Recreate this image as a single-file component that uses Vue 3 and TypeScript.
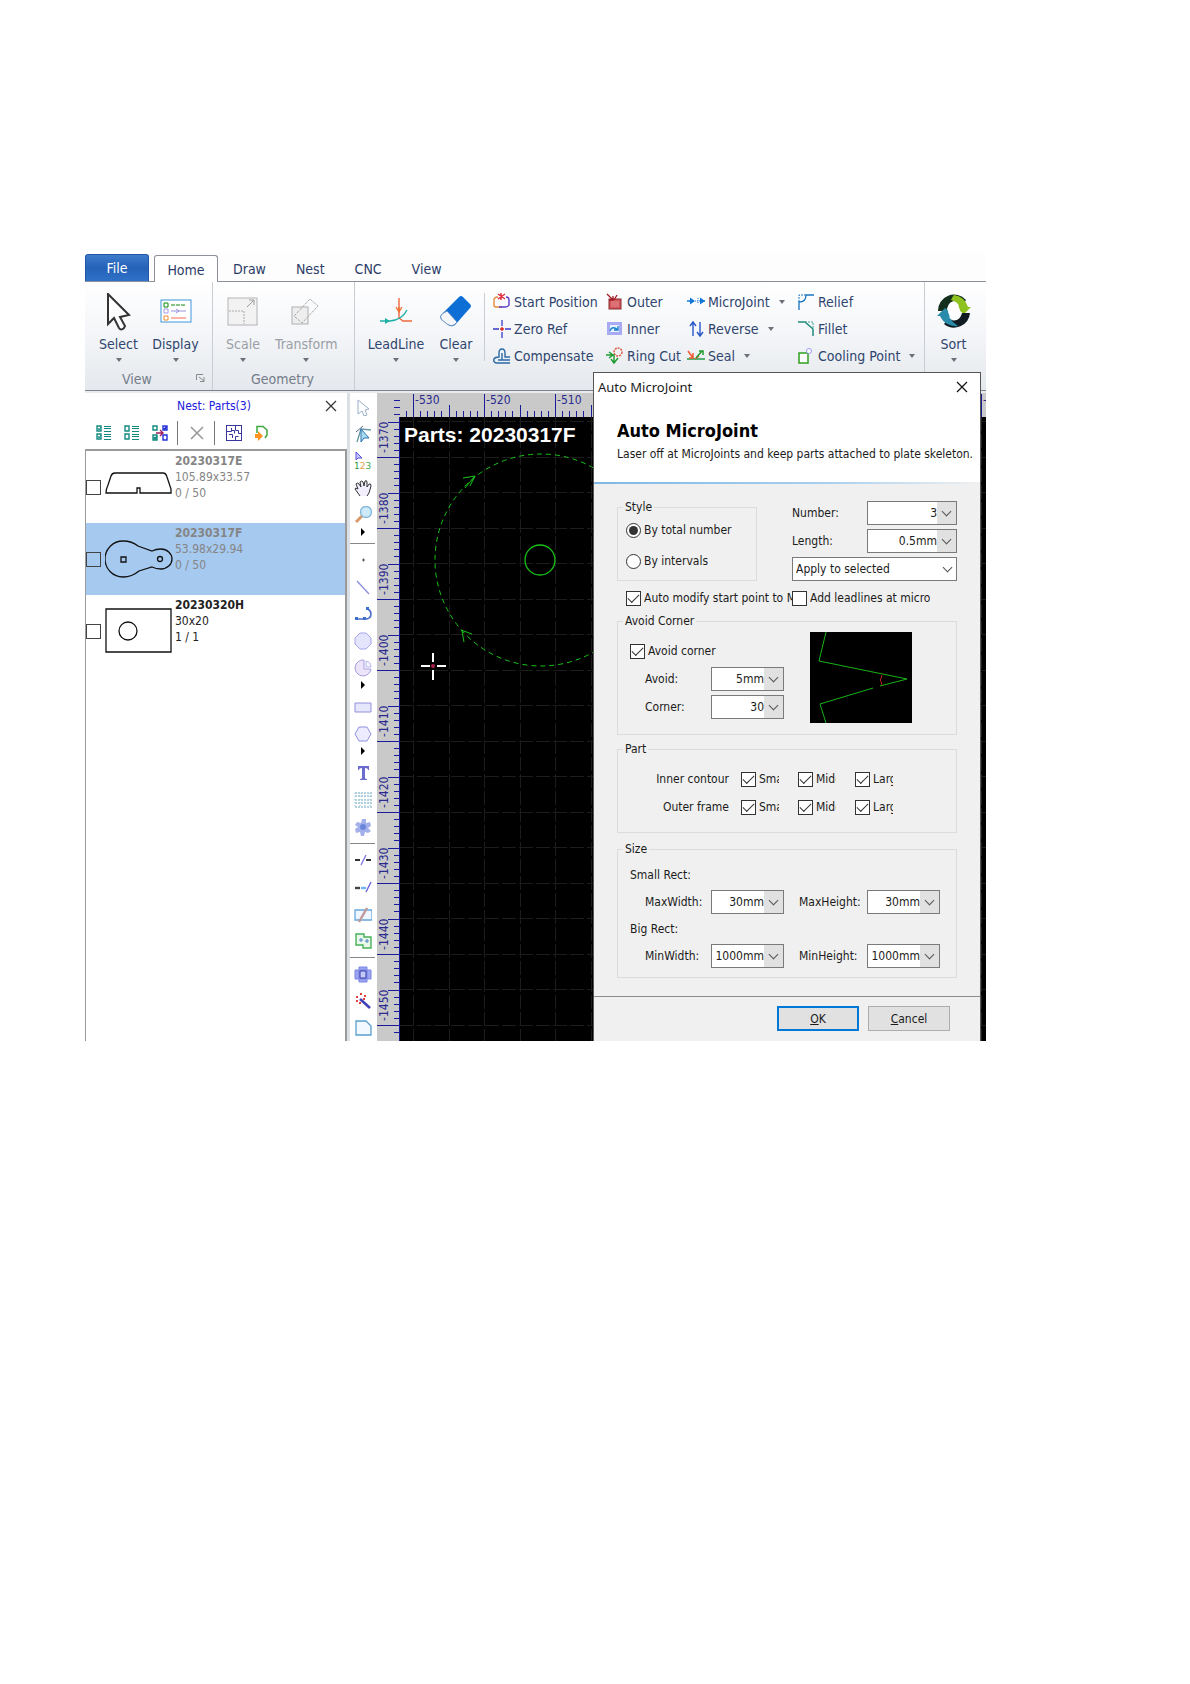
<script setup lang="ts">
import { ref } from 'vue'

interface Command { label: string; icon: string; menu?: boolean; muted?: boolean }
interface Tool { kind: 'tool' | 'more' | 'rule'; label?: string; icon?: string }
interface Part { name: string; size: string; count: string; shape: string; tone: string }

const tabs = ['Home', 'Draw', 'Nest', 'CNC', 'View']

const bigIcons: Record<string, string> = {
  select: '<path d="M7 1V31L13 25L18 35Q20 38 23 35L24 33L19 24L28 22Z" fill="#fff" stroke="#333" stroke-width="2"/>',
  display: '<rect x="3" y="7" width="30" height="22" fill="#fff" stroke="#3c96dc"/><g fill="none"><path d="M6 10h4v4h-4z" stroke="#0a8a0a"/><path d="M6 16h4v4h-4z" stroke="#a79be8"/><path d="M6 23h4v4h-4z" stroke="#f09030"/><path d="M13 12h15" stroke="#0a8a0a" stroke-dasharray="4 1"/><path d="M13 18h15M18 16l3 2l-3 2" stroke="#9a94e0"/><path d="M13 25h15" stroke="#f06a50"/></g>',
  scale: '<rect x="3" y="5" width="29" height="27" fill="#f2f2f2" stroke="#b4b4b4"/><path d="M4 18H19V31" fill="none" stroke="#aaa" stroke-dasharray="2 1"/><path d="M22 14L29 7M24 7h5v5" fill="none" stroke="#999"/>',
  transform: '<rect x="4" y="14" width="16" height="17" fill="#eee" stroke="#b0b0b0"/><path d="M6 23L22 6L30 13L14 30Z" fill="none" stroke="#aaa" stroke-dasharray="3 1"/>',
  lead: '<g fill="none" stroke-width="1.4"><path d="M21 5V25L25 28H34" stroke="#f06a3c"/><path d="M18 14l3 5l3-5M21 14v5" stroke="#f07030"/><path d="M2 28H12Q24 27 29 17" stroke="#1fb0a8"/><path d="M7 25l5 3l-5 3z" fill="#1fb0a8" stroke="none"/></g>',
  clear: '<path d="M3 22L21 4Q23 2 25 4L32 11Q34 13 32 15L17 32Q13 35 9 31L4 27Q1 25 3 22Z" fill="#0d6fd6"/><path d="M4 21L9 18L19 29L16 32Q13 34 9 31L4 27Q1 24 4 21Z" fill="#f4f6fa" stroke="#5b84b5" stroke-width=".8"/>',
  sort: '<path d="M2 18A16 16 0 0 1 30 7L26 13A8 10 0 0 0 11 18Z" fill="#14301c"/><path d="M18 2A16 16 0 0 1 32 14L35 14L28 21L19 14L23 13Q22 9 15 7Q16 4 18 2Z" fill="#8dc21f"/><path d="M34 20A16 16 0 0 1 8 31L13 25A8 10 0 0 0 26 20Z" fill="#101c22"/><path d="M1 23L9 15L17 22L13 24Q16 29 22 33A17 17 0 0 1 4 23Z" fill="#2b8bab"/><ellipse cx="18" cy="18" rx="6" ry="9" fill="#fff" transform="rotate(-14 18 18)"/>',
}

const smallIcons: Record<string, string> = {
  start: '<g fill="none" stroke-width="1.4"><path d="M5 4Q1 4 1 7V12Q1 14 3 14H9" stroke="#e58a3c"/><path d="M13 4Q16 4 16 7V12Q15 14 12 14H6" stroke="#5a3ccc"/><path d="M5 1l7 5M12 1l-7 5M8 0v7" stroke="#e02a3a"/></g>',
  zero: '<path d="M9 0V6M9 12V18M0 9H6M12 9H18" stroke="#3a3ac8" stroke-width="1.3"/><path d="M7 9h4M9 7v4" stroke="#e02020" stroke-width="1.3"/>',
  comp: '<g fill="none" stroke="#2a6aa8" stroke-width="1.4"><path d="M17 16H3Q0 15 1 12Q2 10 6 10V6Q6 2 9 2Q12 2 12 6V10H17"/><path d="M17 13H5M9 13V6"/></g>',
  outer: '<rect x="3" y="6" width="12" height="10" fill="#d0585c" stroke="#8c2a2e"/><path d="M5 8h8v6h-8z" fill="#dc7074"/><path d="M1 1L7 7M7 3v4H3M11 2L8 7" stroke="#a01c24" fill="none" stroke-width="1.3"/>',
  inner: '<rect x="1" y="2" width="15" height="13" fill="#a9aaf4"/><path d="M4 5h9v7h-9z" fill="#e8f2ff"/><path d="M4 11Q6 5 12 10M12 6v4H8" stroke="#1680c8" fill="none" stroke-width="1.3"/>',
  ring: '<circle cx="12" cy="5" r="4" fill="none" stroke="#e0503c" stroke-dasharray="2 1" stroke-width="1.4"/><path d="M0 8H8V16M3 5l4 3l-4 3M5 12l3 4l4-5" fill="none" stroke="#1c9a30" stroke-width="1.4"/>',
  micro: '<path d="M0 8H4M14 8H18" stroke="#1077d8" stroke-width="1.4"/><path d="M3 4.500L8 8L3 11.500ZM18 8L13 4.500V11.500Z" fill="#1077d8"/><path d="M8 8h5M11 5v6" stroke="#1077d8" stroke-dasharray="1 1"/>',
  reverse: '<path d="M6 16V3M3 6l3-4l3 4M13 2V15M10 12l3 4l3-4" fill="none" stroke="#2857c8" stroke-width="1.4"/>',
  seal: '<path d="M0 12H18" stroke="#30a050" stroke-width="1.6"/><path d="M1 4L6 11M6 6v5H2M8 12L12 9" stroke="#f05a30" stroke-width="1.5" fill="none"/><path d="M9 11L15 4M12 4h4v4" stroke="#209a30" stroke-width="1.5" fill="none"/>',
  relief: '<path d="M2 17V9Q9 9 9 2H17" stroke="#1874c0" stroke-width="1.3" fill="none"/><path d="M2 9V2H9" stroke="#1874c0" stroke-dasharray="2 1" fill="none"/>',
  fillet: '<path d="M1 2H8L16 9V16" stroke="#1f8c7c" stroke-width="1.5" fill="none"/><path d="M8 2H16V9" stroke="#40a090" stroke-dasharray="2 1" fill="none"/>',
  cool: '<path d="M2 6H11V16H2Z" fill="#fff" stroke="#2ea01c" stroke-width="1.5"/><circle cx="12" cy="4" r="2.500" fill="#fff" stroke="#9a9af4"/>',
}

const viewCommands: Command[] = [
  { label: 'Select', icon: 'select' },
  { label: 'Display', icon: 'display' },
]
const geometryCommands: Command[] = [
  { label: 'Scale', icon: 'scale', muted: true },
  { label: 'Transform', icon: 'transform', muted: true },
]
const leadCommands: Command[] = [
  { label: 'LeadLine', icon: 'lead' },
  { label: 'Clear', icon: 'clear' },
]
const smallCommands: Command[] = [
  { label: 'Start Position', icon: 'start' },
  { label: 'Outer', icon: 'outer' },
  { label: 'MicroJoint', icon: 'micro', menu: true },
  { label: 'Relief', icon: 'relief' },
  { label: 'Zero Ref', icon: 'zero' },
  { label: 'Inner', icon: 'inner' },
  { label: 'Reverse', icon: 'reverse', menu: true },
  { label: 'Fillet', icon: 'fillet' },
  { label: 'Compensate', icon: 'comp' },
  { label: 'Ring Cut', icon: 'ring' },
  { label: 'Seal', icon: 'seal', menu: true },
  { label: 'Cooling Point', icon: 'cool', menu: true },
]

const tick = '<path d="M1 1h4v5h-4zM1 9h4v5h-4z" fill="none" stroke="#128a80" stroke-width="1.4"/><path d="M8 1.500h7M8 3.500h7M8 6.500h7M8 9.500h7M8 11.500h7M8 14.500h7" stroke="#128a80"/>'
const nestTools = [
  { label: 'Check all', icon: tick + '<path d="M2 3l1 2l2-3M2 11l1 2l2-3" stroke="#128a80" fill="none"/>' },
  { label: 'Uncheck all', icon: tick },
  { label: 'Invert', icon: '<g fill="none" stroke-width="1.400"><path d="M1 1h4v4h-4zM1 10h4v5h-4zM2 12l1 2l2-3" stroke="#128a80"/><path d="M11 1h4v4h-4zM11 10h4v5h-4zM12 3l1 1l2-3" stroke="#2430d8"/><path d="M4 8h7M8 5l3 3l-3 3" stroke="#a01c60"/></g>' },
  { label: '', icon: '' },
  { label: 'Delete', icon: '<path d="M2 2L14 14M14 2L2 14" stroke="#9a9a9a" stroke-width="1.6"/>' },
  { label: '', icon: '' },
  { label: 'Nest', icon: '<path d="M0 0h16v16H0z" fill="none" stroke="#3a36a0" stroke-width="2"/><path d="M5.500 3V6.500H1M3 9.500H6.500V13M9.500 1V5.500H12.500V8.500H16M5.500 5.500H8.500V8.500M9.500 15V11.500H12.500" fill="none" stroke="#3a36a0"/>' },
  { label: 'Export part', icon: '<path d="M3 8V1.500H9L13 5V10L11 13" fill="none" stroke="#3aa83a" stroke-width="1.5"/><path d="M1 9h3V6l5 5l-5 5v-3H1z" fill="#ff9420"/>' },
]

const parts: Part[] = [
  { name: '20230317E', size: '105.89x33.57', count: '0 / 50', tone: 'dim', shape: '<path d="M1 42Q1 38 3 34L6 25Q7 22 10 22H58Q61 22 62 26L66 38V42H35V37H32V42Z"/>' },
  { name: '20230317F', size: '53.98x29.94', count: '0 / 50', tone: 'dim selected', shape: '<path d="M18 18Q27 18 33 23L47 28Q51 26 56 26A11 10 0 0 1 56 46Q51 46 47 44L34 48Q27 54 18 54A18 18 0 0 1 18 18Z"/><path d="M16 34h5v5h-5z"/><circle cx="55" cy="36" r="2.500"/>' },
  { name: '20230320H', size: '30x20', count: '1 / 1', tone: '', shape: '<path d="M1 14H66V57H1Z"/><circle cx="23" cy="36" r="9"/>' },
]

const more: Tool = { kind: 'more' }
const rule: Tool = { kind: 'rule' }
const t = (label: string, icon: string): Tool => ({ kind: 'tool', label, icon })
const tools: Tool[] = [
  t('Select', '<path d="M4 2V16L8 13L10 18L13 17L11 12L15 11Z" fill="#fff" stroke="#9ab0cc"/>'),
  t('Edit nodes', '<path d="M3 17L7 4L17 5" fill="none" stroke="#6a9aa8" stroke-width="1.400"/><path d="M2 7L9 1" stroke="#5a6a8a"/><path d="M7 4V17L10 13L15 13Z" fill="#a8dcf0" stroke="#2a70b0"/>'),
  t('Sequence', '<path d="M2 0V8L4 6L8 6Z" fill="#c8c8ff" stroke="#5a50d8"/><text x="0" y="17" font-size="9" font-family="DejaVu Sans" fill="#e0a040"><tspan fill="#2a9a40">1</tspan>2<tspan fill="#3aa850">3</tspan></text>'),
  t('Pan', '<path d="M6 17L1 10Q1 8 4 10L2 5Q3 3 5 5L7 8L6 3Q8 1 9 3L10 7L11 2Q13 1 13 3V8L15 5Q17 4 17 7L15 14L13 17" fill="#f2eefc" stroke="#333"/>'),
  t('Zoom', '<path d="M2 16L8 10" stroke="#d89a6c" stroke-width="3"/><circle cx="12" cy="6" r="5.500" fill="#cdeafa" stroke="#88b8d8" stroke-width="1.400"/>'),
  more, rule,
  t('Point', '<path d="M8 9h3M9.500 7.500v3" stroke="#555"/>'),
  t('Line', '<path d="M3 3L15 16" stroke="#8a90dc" stroke-width="1.300"/>'),
  t('Arc', '<path d="M2 14H11Q17 14 17 9Q17 6 14 4" fill="none" stroke="#4a6ec8" stroke-width="1.600"/><path d="M1 12h3v3H1zM9 12h3v3H9zM12 2h3v3h-3z" fill="#3a70d0"/>'),
  t('Circle', '<path d="M6 1H12L17 6V12L12 17H6L1 12V6Z" fill="#e4e4fc" stroke="#a6a6ec"/>'),
  t('Pie', '<path d="M10 1A8 8 0 1 0 17 10H10Z" fill="#ece4f8" stroke="#a6a0e0"/><path d="M12 2v6h5q0-5-5-6z" fill="#f4f4ff" stroke="#b8b8ec"/>'),
  more,
  t('Rectangle', '<path d="M1 5H17V14H1Z" fill="#e6e6fc" stroke="#9292dc"/>'),
  t('Polygon', '<path d="M5 2H13L17 9L13 16H5L1 9Z" fill="#ececfe" stroke="#8f92e0"/>'),
  more,
  t('Text', '<path d="M4 2H15V6H14Q14 4 11 4V14Q11 15 13 15V16H6V15Q8 15 8 14V4Q5 4 5 6H4Z" fill="#6c6cd0"/>'),
  t('Array', '<path d="M1 2H18M1 5H18M1 9H18M1 12H18M1 16H18" stroke="#6aa4c0" stroke-dasharray="2 1"/><path d="M1 2V17M6 2V17M11 2V17M16 2V17" stroke="#9cc4dc" stroke-dasharray="1 2"/>'),
  t('Library', '<path d="M8 1h4v4l4-1l1 4l-3 2l3 3l-3 2l-3-1l-1 4h-3l-1-4l-4 1l-1-4l3-2l-3-2l2-3l4 1z" fill="#a4b0ea"/><circle cx="9" cy="9" r="3" fill="#6a86dc"/>'),
  rule,
  t('Split', '<path d="M1 9H7M12 9H18" stroke="#333" stroke-width="2" stroke-dasharray="5 1"/><path d="M7 14L12 4" stroke="#8078e0" stroke-width="1.400"/>'),
  t('Extend', '<path d="M1 10H6" stroke="#444" stroke-width="2.400"/><path d="M7 10H12" stroke="#6ab8ec" stroke-width="2.400"/><path d="M12 14L17 4" stroke="#6a60d8" stroke-width="1.400"/>'),
  t('Trim', '<path d="M1 5H18V15H1Z" fill="#eef6ff" stroke="#6aa8dc" stroke-width="1.300"/><path d="M5 17L13 3" stroke="#c09a9a" stroke-width="2.500"/>'),
  t('Combine', '<path d="M2 2H10V5H17V16H9V13H2Z" fill="#eaf8ea" stroke="#48b058" stroke-width="1.400"/><path d="M5 8h4M7 6v4M11 9h4M13 7v4" stroke="#4a80c8"/>'),
  rule,
  t('Union', '<path d="M1 5H17V14H1ZM5 2H13V17H5Z" fill="#9ba4ee" stroke="#7a86e4"/><path d="M6 6H12V13H6Z" fill="#c4caf8" stroke="#3038a8"/>'),
  t('Wizard', '<path d="M6 7L16 16" stroke="#4040b8" stroke-width="2.600"/><path d="M2 5h2M6 2h2M10 4h2M2 9h2M5 11h2M9 7h2" stroke="#e04040" stroke-width="2"/>'),
  t('Chamfer', '<path d="M2 2H12L17 7V16H2Z" fill="#f2f9ff" stroke="#5a9ed0" stroke-width="1.300"/>'),
]

const step = 71
const majorColumns = Array.from({ length: 9 }, (_, i) => ({ at: 36 + i * step, label: `${-530 + i * 10}` }))
const majorRows = Array.from({ length: 9 }, (_, i) => ({ at: 64 + i * step, label: `${-1370 - i * 10}` }))

function ruler(first: number, last: number, origin: number, horizontal: boolean): string {
  let d = ''
  for (let i = first; i <= last; i++) {
    const at = Math.round(origin + (i * step) / 10)
    const length = i % 10 === 0 ? 23 : i % 5 === 0 ? 12 : 6
    d += horizontal ? `M${at}.5 24V${24 - length}` : `M23 ${at}.5H${23 - length}`
  }
  return d
}
const topTicks = ruler(-1, 80, 36, true)
const sideTicks = ruler(-8, 81, 64, false) + 'M22.5 24V648'
const grid = (() => {
  let d = ''
  for (let i = 0; i < 17; i++) d += `M${Math.round(13 + i * 35.5)}.5 0V624`
  for (let i = 0; i < 18; i++) d += `M0 ${Math.round(4 + i * 35.5)}.5H590`
  return d
})()

const style = ref('total')
const count = ref('3')
const length = ref('0.5mm')
const avoid = ref('5mm')
const corner = ref('30')
const maxW = ref('30mm')
const maxH = ref('30mm')
const minW = ref('1000mm')
const minH = ref('1000mm')
const partRows = ['Inner contour', 'Outer frame']
const sizes = ['Small', 'Middle', 'Large']
</script>

<template>
  <main class="app">
    <nav class="tabs">
      <button class="file">File</button>
      <button v-for="(tab, i) in tabs" :key="tab" class="tab" :class="{ active: i === 0 }">{{ tab }}</button>
    </nav>

    <header class="ribbon">
      <section class="group view">
        <div class="bigs">
          <button v-for="c in viewCommands" :key="c.label" class="big">
            <svg width="36" height="38" viewBox="0 0 36 38" v-html="bigIcons[c.icon]" />
            <span>{{ c.label }}</span><i class="caret" />
          </button>
        </div>
        <div class="caption">View
          <svg class="launcher" width="9" height="8" viewBox="0 0 9 8"><path d="M.5 6V.5H7M3 3L8 7M8 3V7.500H4" fill="none" stroke="#888" /></svg>
        </div>
      </section>
      <section class="group geometry">
        <div class="bigs">
          <button v-for="c in geometryCommands" :key="c.label" class="big muted">
            <svg width="36" height="38" viewBox="0 0 36 38" v-html="bigIcons[c.icon]" />
            <span>{{ c.label }}</span><i class="caret" />
          </button>
        </div>
        <div class="caption">Geometry</div>
      </section>
      <section class="group cutting">
        <div class="bigs lead">
          <button v-for="c in leadCommands" :key="c.label" class="big">
            <svg width="36" height="38" viewBox="0 0 36 38" v-html="bigIcons[c.icon]" />
            <span>{{ c.label }}</span><i class="caret" />
          </button>
        </div>
        <div class="smalls">
          <button v-for="c in smallCommands" :key="c.label" class="small">
            <svg width="18" height="18" viewBox="0 0 18 18" v-html="smallIcons[c.icon]" />
            <span>{{ c.label }}</span><i v-if="c.menu" class="caret" />
          </button>
        </div>
      </section>
      <section class="group sort">
        <button class="big">
          <svg width="36" height="38" viewBox="0 0 36 38" v-html="bigIcons.sort" />
          <span>Sort</span><i class="caret" />
        </button>
      </section>
    </header>

    <div class="workspace">
      <aside class="nest">
        <div class="nest-title">
          <h2>Nest: Parts(3)</h2>
          <button class="close" aria-label="Close panel"><svg width="12" height="12" viewBox="0 0 12 12"><path d="M1 1L11 11M11 1L1 11" stroke="#333" stroke-width="1.200" /></svg></button>
        </div>
        <div class="nest-tools">
          <template v-for="(n, i) in nestTools" :key="i">
            <button v-if="n.label" :aria-label="n.label"><svg width="16" height="16" viewBox="0 0 16 16" v-html="n.icon" /></button>
            <i v-else />
          </template>
        </div>
        <ul class="parts">
          <li v-for="p in parts" :key="p.name" :class="p.tone">
            <input :id="p.name" type="checkbox" />
            <svg width="68" height="72" viewBox="0 0 68 72" fill="none" stroke="#111" stroke-width="1.300" v-html="p.shape" />
            <label :for="p.name"><b>{{ p.name }}</b><span>{{ p.size }}</span><span>{{ p.count }}</span></label>
          </li>
        </ul>
      </aside>

      <div class="tools">
        <template v-for="(tool, i) in tools" :key="i">
          <button v-if="tool.kind === 'tool'" class="tool" :aria-label="tool.label"><svg width="18" height="18" viewBox="0 0 18 18" v-html="tool.icon" /></button>
          <button v-else-if="tool.kind === 'more'" class="more" aria-label="More"><i /></button>
          <i v-else class="rule" />
        </template>
      </div>

      <div class="stage">
        <svg class="side-ruler" width="23" height="648" viewBox="0 0 23 648">
          <path :d="sideTicks" stroke="#1a1a9c" />
          <text v-for="m in majorRows" :key="m.label" :transform="`translate(11 ${m.at - 4}) rotate(-90)`">{{ m.label }}</text>
        </svg>
        <div class="plane">
          <svg class="top-ruler" height="24">
            <path :d="topTicks" stroke="#1a1a9c" transform="translate(-23 0)" />
            <text v-for="m in majorColumns" :key="m.label" :x="m.at - 21" y="11">{{ m.label }}</text>
          </svg>
          <div class="canvas">
            <svg class="drawing">
              <path :d="grid" stroke="#1c1c1c" stroke-dasharray="14 3" />
              <g fill="none" stroke="#18c418">
                <circle cx="141" cy="143" r="106" stroke-dasharray="5 4" />
                <circle cx="140" cy="143" r="15" stroke-width="1.300" />
                <path d="M63 61L75 59L70 69M75 59L65 71M62 214L64 225M61 213L72 217" />
              </g>
              <path d="M21 249h9M37 249h9M33 236v9M33 253v10" stroke="#fff" stroke-width="2" />
              <circle cx="33" cy="249" r="2" fill="#b01c48" />
            </svg>
            <strong>Parts: 20230317F</strong>
          </div>
        </div>
      </div>
    </div>

    <form class="dialog" role="dialog" aria-label="Auto MicroJoint" @submit.prevent>
      <div class="titlebar">
        <span>Auto MicroJoint</span>
        <button type="button" class="close" aria-label="Close"><svg width="12" height="12" viewBox="0 0 12 12"><path d="M1 1L11 11M11 1L1 11" stroke="#111" stroke-width="1.200" /></svg></button>
      </div>
      <div class="intro">
        <h1>Auto MicroJoint</h1>
        <p>Laser off at MicroJoints and keep parts attached to plate skeleton.</p>
      </div>
      <div class="accent" />

      <div class="body">
        <div class="first">
          <fieldset class="style">
            <legend>Style</legend>
            <label class="check"><input v-model="style" type="radio" value="total" />By total number</label>
            <label class="check"><input v-model="style" type="radio" value="intervals" />By intervals</label>
          </fieldset>
          <div class="amounts">
            <div class="pair"><label for="number">Number:</label><span class="combo wide"><input id="number" v-model="count" /><button type="button" aria-label="Number options"><i /></button></span></div>
            <div class="pair"><label for="length">Length:</label><span class="combo wide"><input id="length" v-model="length" /><button type="button" aria-label="Length options"><i /></button></span></div>
            <span class="picker"><select aria-label="Apply to"><option>Apply to selected</option><option>Apply to all</option></select><i /></span>
          </div>
        </div>
        <div class="options">
          <label class="check modify"><input type="checkbox" checked /><span>Auto modify start point to MicroJoint</span></label>
          <label class="check leads"><input type="checkbox" /><span>Add leadlines at microjoint</span></label>
        </div>

        <fieldset class="corner">
          <legend>Avoid Corner</legend>
          <div class="corner-fields">
            <label class="check"><input type="checkbox" checked />Avoid corner</label>
            <div class="field"><label for="avoid">Avoid:</label><span class="combo"><input id="avoid" v-model="avoid" /><button type="button" aria-label="Avoid options"><i /></button></span></div>
            <div class="field"><label for="corner">Corner:</label><span class="combo"><input id="corner" v-model="corner" /><button type="button" aria-label="Corner options"><i /></button></span></div>
          </div>
          <svg width="102" height="91" viewBox="0 0 102 91">
            <rect width="102" height="91" fill="#000" />
            <path d="M16 0L9 29L97 47L70 54M63 56L10 72L16 91" fill="none" stroke="#16b416" />
            <path d="M72 43Q69 48 72 53" fill="none" stroke="#c02020" />
          </svg>
        </fieldset>

        <fieldset class="part">
          <legend>Part</legend>
          <div v-for="row in partRows" :key="row" class="part-row">
            <span class="part-name">{{ row }}</span>
            <label v-for="s in sizes" :key="s" class="check"><input type="checkbox" checked /><span>{{ s }}</span></label>
          </div>
        </fieldset>

        <fieldset class="size">
          <legend>Size</legend>
          <p>Small Rect:</p>
          <div class="field">
            <label for="maxw">MaxWidth:</label><span class="combo"><input id="maxw" v-model="maxW" /><button type="button" aria-label="MaxWidth options"><i /></button></span>
            <label for="maxh" class="second">MaxHeight:</label><span class="combo"><input id="maxh" v-model="maxH" /><button type="button" aria-label="MaxHeight options"><i /></button></span>
          </div>
          <p>Big Rect:</p>
          <div class="field">
            <label for="minw">MinWidth:</label><span class="combo"><input id="minw" v-model="minW" /><button type="button" aria-label="MinWidth options"><i /></button></span>
            <label for="minh" class="second">MinHeight:</label><span class="combo"><input id="minh" v-model="minH" /><button type="button" aria-label="MinHeight options"><i /></button></span>
          </div>
        </fieldset>
      </div>
      <footer>
        <button type="submit" class="ok"><u>O</u>K</button>
        <button type="button"><u>C</u>ancel</button>
      </footer>
    </form>
  </main>
</template>

<style>
body { background: #fff; }
</style>

<style scoped>
* { box-sizing: border-box; }
button { padding: 0; border: 0; background: none; font: inherit; color: inherit; }
h1, h2, p, ul { margin: 0; padding: 0; }
svg { display: block; flex: none; overflow: hidden; }

.app {
  position: relative;
  margin: 253px 204px 0 85px;
  overflow: hidden;
  font: 12px/16px "DejaVu Sans Condensed", "DejaVu Sans", sans-serif;
  color: #1b1b1b;
}

.tabs { display: flex; height: 29px; align-items: flex-end; border-bottom: 1px solid #8b909a; background: #fdfdfd; font-size: 14px; color: #2b3c66; }
.file { width: 64px; height: 27px; margin-right: 5px; border: 1px solid #2257a8; border-bottom: 0; border-radius: 3px 3px 0 0; background: linear-gradient(#3f7acb, #2462b8 50%, #2f72c8); color: #fff; }
.tab { height: 24px; padding: 0 15px; }
.tab.active { width: 64px; height: 27px; padding: 2px 0 0; margin-bottom: -1px; border: 1px solid #8b909a; border-bottom: 0; border-radius: 3px 3px 0 0; background: #fff; }

.ribbon { display: flex; height: 109px; border-bottom: 1px solid #7f838c; background: linear-gradient(#fff, #f3f5f8 50%, #e5e8ec); font-size: 14px; color: #2f456e; }
.group { display: flex; flex-direction: column; border-right: 1px solid #c9ccd2; }
.view { width: 128px; padding-left: 5px; }
.geometry { width: 142px; }
.cutting { flex: 1; flex-direction: row; }
.sort { width: 61px; padding-right: 4px; border: 0; }
.bigs { display: flex; }
.bigs.lead { width: 130px; height: 68px; margin-top: 11px; padding-left: 11px; border-right: 1px solid #c9ccd2; }
.bigs.lead .big { margin-top: -11px; }
.big { display: flex; flex-direction: column; align-items: center; min-width: 57px; padding: 11px 2px 0; }
.geometry .big, .lead .big { min-width: 60px; }
.big span { margin-top: 4px; line-height: 18px; }
.big .caret { margin-top: 5px; }
.muted { color: #9b9fa6; }
.caret { width: 0; height: 0; border: 3px solid transparent; border-top: 4px solid #6c7078; border-bottom: 0; }
.caption { position: relative; margin-top: 8px; padding-right: 28px; text-align: center; line-height: 18px; color: #747c8a; }
.geometry .caption { padding-right: 2px; }
.launcher { position: absolute; right: 7px; top: 4px; }
.smalls { display: grid; grid-template-columns: 113px 81px 110px auto; grid-auto-rows: 27px; align-content: start; padding: 6px 0 0 8px; }
.small { display: flex; align-items: center; white-space: nowrap; }
.small span { margin-left: 3px; }
.small .caret { margin-left: 9px; }

.workspace { display: flex; padding-top: 2px; background: #e9ebef; }
.nest { display: flex; flex-direction: column; width: 262px; background: #fff; }
.nest-title { display: flex; align-items: center; height: 26px; padding-right: 10px; }
.nest-title h2 { flex: 1; padding-left: 18px; text-align: center; font-size: 12px; font-weight: 400; color: #2020dc; }
.nest-tools { display: flex; align-items: center; gap: 12px; height: 30px; padding: 0 0 2px 11px; }
.nest-tools i { width: 1px; height: 24px; margin: 0 -1px 0 -3px; background: #777; }
.parts { flex: 1; list-style: none; border: solid #9a9a9a; border-width: 2px 2px 0 1px; }
.parts li { display: flex; height: 72px; align-items: center; color: #222; }
.parts .dim { color: #858585; }
.parts .selected { background: #a6c9ef; }
.parts input { appearance: none; width: 15px; height: 15px; margin: 0 4px 0 0; border: 1px solid #444; }
.parts label { align-self: flex-start; display: flex; flex-direction: column; padding: 2px 0 0 2px; }

.tools { display: flex; flex-direction: column; width: 30px; padding-right: 2px; border-left: 3px solid #dcdfe4; background: #fff; }
.tool { display: flex; align-items: center; justify-content: center; height: 27px; }
.more { height: 12px; padding-bottom: 4px; }
.more i { display: block; width: 0; margin: 0 auto; border: 4px solid transparent; border-left-color: #000; border-right: 0; }
.rule { height: 6px; background: linear-gradient(#888, #888) center / 100% 1px no-repeat; }

.stage { display: flex; flex: 1; min-width: 0; background: #c9c9c9; }
.stage text { font: 12px "DejaVu Sans Condensed", sans-serif; fill: #2a2a8e; }
.plane { display: flex; flex-direction: column; flex: 1; min-width: 0; }
.top-ruler { width: 100%; }
.canvas { position: relative; flex: 1; overflow: hidden; background: #000; }
.drawing { position: absolute; inset: 0; width: 100%; height: 100%; }
.canvas strong { position: relative; display: block; padding: 6px 4px; font: bold 21px/24px "Liberation Sans", Arial, sans-serif; color: #fff; }

.dialog { position: absolute; top: 119px; right: 5px; width: 388px; border: 1px solid #555; border-bottom: 0; background: #f0f0f0; }
.titlebar { display: flex; justify-content: space-between; align-items: center; height: 28px; padding: 0 12px 0 4px; background: #fff; font: 13px/18px "Noto Sans", sans-serif; }
.intro { padding: 18px 0 19px 23px; background: #fff; white-space: nowrap; }
.intro h1 { font-size: 18px; line-height: 24px; color: #000; }
.intro p { margin-top: 2px; line-height: 18px; }
.accent { height: 2px; background: linear-gradient(90deg, #7fb8e6, #a8cfee 60%, #f0f0f0); }
.body { display: flex; flex-direction: column; gap: 6px; padding: 15px 23px 18px; }
fieldset { min-width: 0; margin: 0; padding: 0; border: 1px solid #dcdcdc; }
legend { margin-left: -7px; padding: 0 2px; line-height: 16px; }
.first { display: flex; gap: 35px; }
.style { display: flex; flex-direction: column; gap: 13px; width: 140px; padding: 6px 8px 0; }
.style legend { margin-left: -3px; }
.amounts { display: flex; flex: 1; flex-direction: column; gap: 4px; padding-top: 2px; }
.pair { display: flex; justify-content: space-between; align-items: center; }
.check { display: flex; align-items: center; height: 18px; white-space: nowrap; }
.check input { appearance: none; flex: none; display: grid; place-content: center; width: 15px; height: 15px; margin: 0 3px 0 0; border: 1px solid #333; background: #fff; }
.check input[type="radio"] { border-radius: 50%; }
.check input[type="radio"]:checked::after { content: ""; width: 9px; height: 9px; border-radius: 50%; background: #333; }
.check input[type="checkbox"]:checked::after { content: ""; width: 10px; height: 5px; margin-bottom: 3px; border: solid #333; border-width: 0 0 1px 1px; transform: rotate(-45deg); }
.check span { overflow: hidden; }
.combo { display: flex; width: 73px; height: 24px; border: 1px solid #7a7a7a; background: #fff; }
.combo.wide { width: 90px; }
.combo input { flex: 1; min-width: 0; padding: 0; border: 0; outline: 0; background: none; font: inherit; color: inherit; text-align: right; }
.combo button { display: grid; place-content: center; width: 19px; background: #e1e1e1; }
.combo i, .picker i { width: 7px; height: 7px; margin-top: -3px; border: solid #555; border-width: 0 1px 1px 0; transform: rotate(45deg); }
.picker { position: relative; display: flex; height: 24px; }
.picker select { appearance: none; width: 100%; padding: 0 3px; border: 1px solid #7a7a7a; border-radius: 0; background: #fff; font: inherit; color: inherit; }
.picker i { position: absolute; right: 6px; top: 10px; pointer-events: none; }
.options { display: flex; padding: 2px 0 0 9px; }
.modify { width: 166px; }
.leads { width: 138px; }
.corner { display: flex; gap: 26px; padding: 3px 0 11px 12px; }
.corner-fields { display: flex; flex-direction: column; gap: 4px; padding-top: 10px; }
.corner-fields .check { margin-bottom: 3px; }
.field { display: flex; align-items: center; height: 24px; padding-left: 15px; }
.field label { width: 66px; }
.field .second { width: 68px; margin-left: 15px; }
.part { padding: 8px 0 11px 12px; }
.part-row { display: flex; align-items: center; height: 28px; }
.part-name { width: 111px; padding-right: 12px; text-align: right; }
.part-row .check { width: 57px; }
.part-row .check span { width: 20px; }
.size { display: flex; flex-direction: column; gap: 7px; margin-top: 2px; padding: 10px 0 9px 12px; }
footer { display: flex; justify-content: flex-end; gap: 9px; padding: 9px 30px 10px; border-top: 1px solid #8c8c8c; }
footer button { width: 82px; height: 25px; border: 1px solid #adadad; background: #e1e1e1; }
footer .ok { border: 2px solid #0078d7; }
</style>
